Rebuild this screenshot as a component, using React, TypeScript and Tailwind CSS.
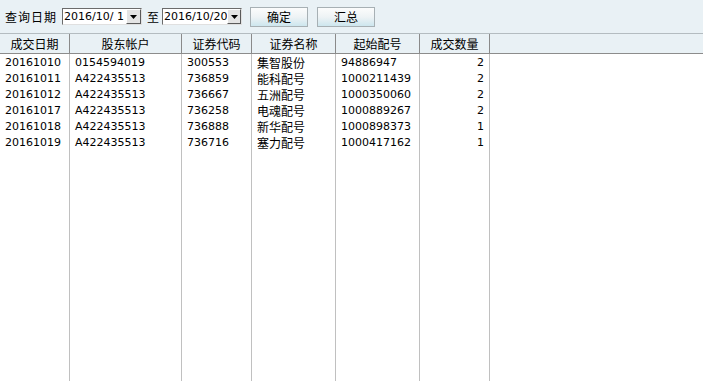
const rows = [
  ["20161010", "0154594019", "300553", "集智股份", "94886947", "2"],
  ["20161011", "A422435513", "736859", "能科配号", "1000211439", "2"],
  ["20161012", "A422435513", "736667", "五洲配号", "1000350060", "2"],
  ["20161017", "A422435513", "736258", "电魂配号", "1000889267", "2"],
  ["20161018", "A422435513", "736888", "新华配号", "1000898373", "1"],
  ["20161019", "A422435513", "736716", "塞力配号", "1000417162", "1"],
];

const columns = [
  { title: "成交日期", width: "w-[70px]" },
  { title: "股东帐户", width: "w-[112px]" },
  { title: "证券代码", width: "w-[70px]" },
  { title: "证券名称", width: "w-[84px]" },
  { title: "起始配号", width: "w-[84px]" },
  { title: "成交数量", width: "w-[70px]" },
];

const cjk = "font-['Noto_Sans_CJK_SC',sans-serif]";
const num = "font-['DejaVu_Sans','Noto_Sans_CJK_SC',sans-serif]";

function DateBox({ value }: { value: string }) {
  return (
    <div className="flex h-[17px] w-[80px] border border-t-[#6b6b6b] border-l-[#6b6b6b] border-r-[#e0e0e0] border-b-[#e0e0e0] bg-white">
      <span className={`flex-1 whitespace-pre pl-[1px] text-[11px] leading-[15px] text-black ${num}`}>
        {value}
      </span>
      <span className="flex h-[15px] w-[15px] items-center justify-center border border-t-white border-l-white border-r-[#5a5a5a] border-b-[#5a5a5a] bg-[#e4e4e4]">
        <svg width="7" height="4" viewBox="0 0 7 4">
          <path d="M0 0h7L3.5 4z" fill="#000" />
        </svg>
      </span>
    </div>
  );
}

function ToolButton({ label }: { label: string }) {
  return (
    <button className={`h-[20px] w-[58px] border border-[#a7b0b4] bg-gradient-to-b from-[#fbfcfc] via-[#eef3f5] to-[#cde6ee] text-[12px] leading-[18px] text-black ${cjk}`}>
      {label}
    </button>
  );
}

export default function App() {
  return (
    <div className="flex h-[381px] w-[703px] flex-col overflow-hidden bg-white">
      <div className={`flex h-[33px] items-center bg-[#e9f1f5] pl-[5px] text-[12px] text-black ${cjk}`}>
        <span className="mr-[5px] tracking-[1px]">查询日期</span>
        <DateBox value="2016/10/ 1" />
        <span className="ml-[5px] mr-[3px]">至</span>
        <DateBox value="2016/10/20" />
        <div className="ml-[8px] flex gap-[9px]">
          <ToolButton label="确定" />
          <ToolButton label="汇总" />
        </div>
      </div>

      <div className="flex h-[21px] border-t border-b border-t-[#b4bcc0] border-b-[#8c8c8c] bg-[#e9f1f5]">
        {columns.map((c) => (
          <div
            key={c.title}
            className={`${c.width} border-r border-[#8a8a8a] text-center text-[12px] leading-[19px] text-black ${cjk}`}
          >
            {c.title}
          </div>
        ))}
      </div>

      <div className="flex flex-1">
        {columns.map((c, ci) => (
          <div key={c.title} className={`${c.width} border-r border-[#c0c0c0]`}>
            {rows.map((r, ri) => (
              <div
                key={ri}
                className={`h-[16px] px-[5px] leading-[17px] text-black ${
                  ci === 3 ? `${cjk} text-[12px]` : `${num} text-[11px]`
                } ${ci === 5 ? "text-right" : ""}`}
              >
                {r[ci]}
              </div>
            ))}
          </div>
        ))}
      </div>
    </div>
  );
}
